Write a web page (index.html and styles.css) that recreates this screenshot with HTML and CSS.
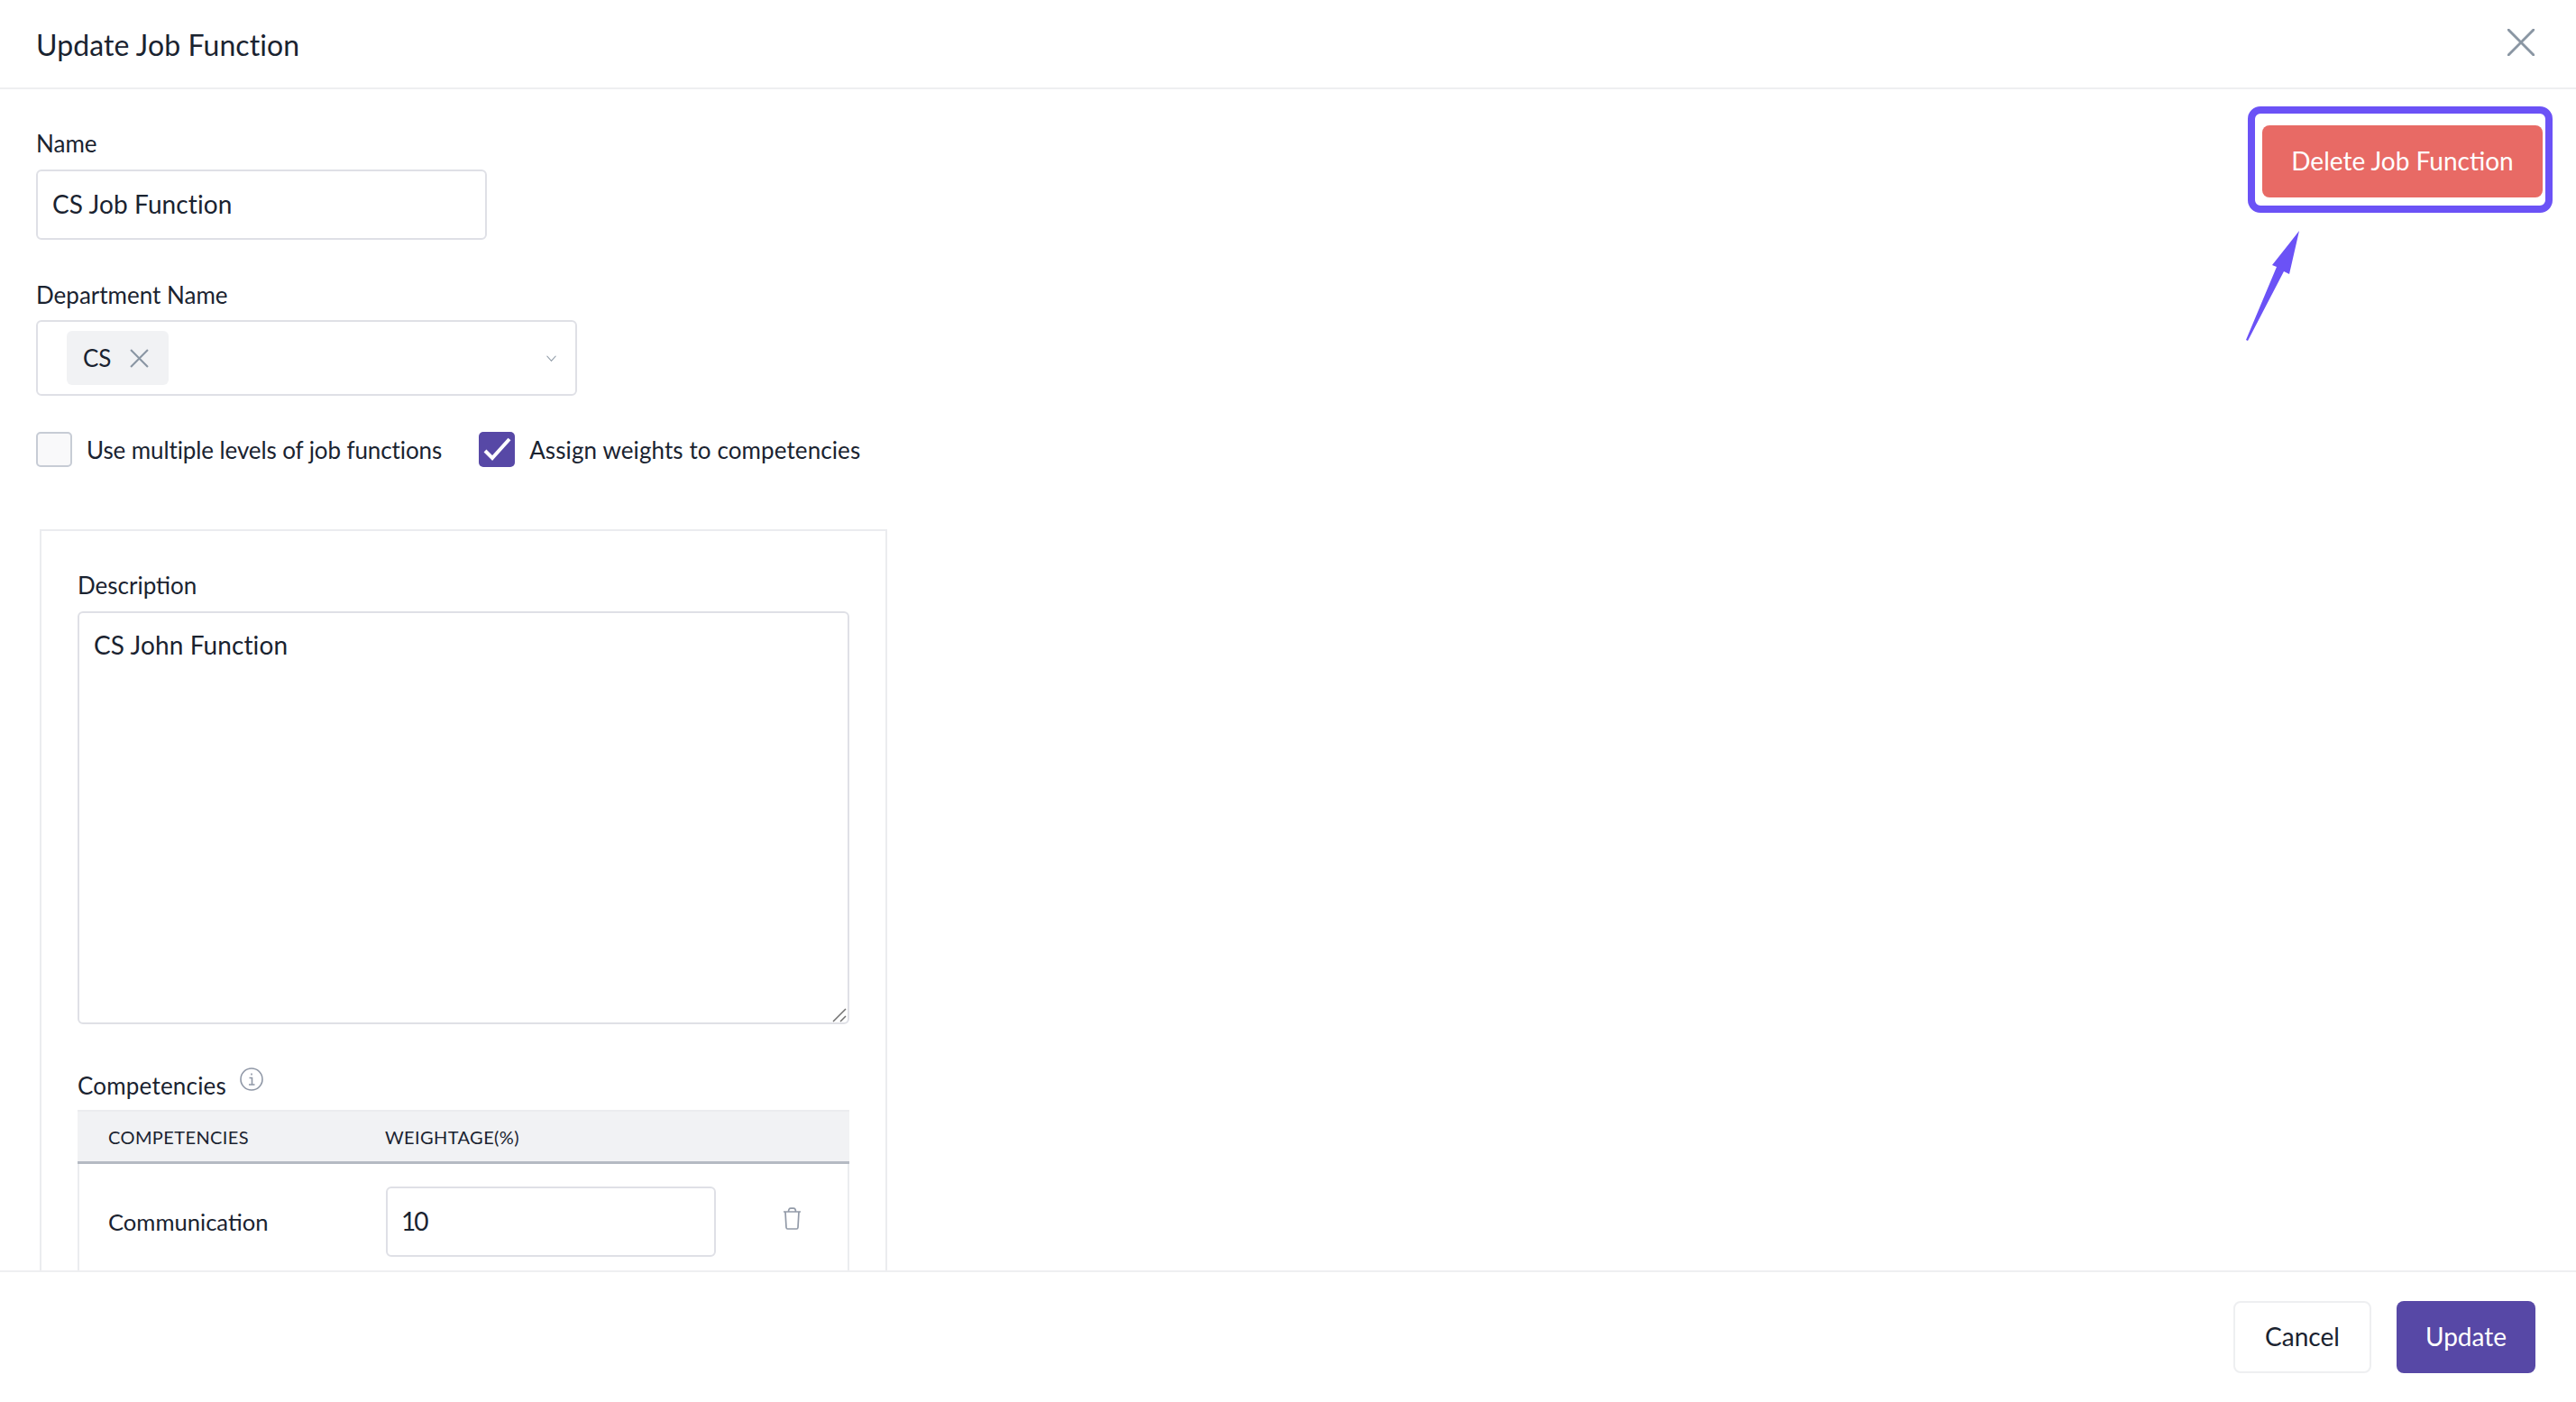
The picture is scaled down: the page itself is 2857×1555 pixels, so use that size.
FILE: index.html
```html
<!DOCTYPE html>
<html lang="en">
<head>
<meta charset="utf-8">
<title>Update Job Function</title>
<link rel="stylesheet" href="styles.css">
</head>
<body>
<div class="page">
  <header class="top">
    <h1 class="title">Update Job Function</h1>
    <svg class="close" viewBox="0 0 30 30"><path d="M1 1 29 29M29 1 1 29"/></svg>
  </header>
  <main class="main">
    <form class="form">
      <div class="label">Name</div>
      <div class="field name-field">CS Job Function</div>
      <div class="label dept-label">Department Name</div>
      <div class="select">
        <span class="chip"><span>CS</span>
          <svg class="chip-x" viewBox="0 0 20 20"><path d="M1 1 19 19M19 1 1 19"/></svg>
        </span>
        <svg class="chevron" viewBox="0 0 10 6"><path d="M.5.5 5 5.5 9.5.5"/></svg>
      </div>
      <div class="checks">
        <div class="check-item">
          <span class="box"></span>
          <span class="check-label tight">Use multiple levels of job functions</span>
        </div>
        <div class="check-item">
          <span class="box on"><svg viewBox="0 0 40 39"><path d="M7 21 15 29 34 8"/></svg></span>
          <span class="check-label loose">Assign weights to competencies</span>
        </div>
      </div>
      <section class="panel">
        <div class="label">Description</div>
        <div class="area-wrap">
          <textarea class="area">CS John Function</textarea>
          <svg class="grip" viewBox="0 0 16 16"><path d="M1 15 15 1M9 15 15 9"/></svg>
        </div>
        <div class="comp-head">
          <span class="label comp-label">Competencies</span>
          <svg class="info" viewBox="0 0 26 26"><circle cx="13" cy="13" r="12"/><path d="M10.500 11.500H13.500V19M10 19H16.500M13 6.500V8.500"/></svg>
        </div>
        <div class="table">
          <div class="thead"><span>COMPETENCIES</span><span>WEIGHTAGE(%)</span></div>
          <div class="row">
            <span class="cell-name">Communication</span>
            <div class="field weight">10</div>
            <svg class="trash" viewBox="0 0 21 25"><path d="M1 5H20M3 5 4 22.500Q4.200 24 5.500 24H15.500Q16.800 24 17 22.500L18 5M6.500 5Q6.500 1.200 9 1.200H12Q14.500 1.200 14.500 5"/></svg>
          </div>
        </div>
      </section>
    </form>
    <div class="delete-wrap">
      <button type="button" class="btn danger">Delete Job Function</button>
      <span class="highlight"></span>
      <svg class="arrow" viewBox="0 0 62 124"><path d="M60 1 49 49 43 46 3 123 1 122 35 41 30 39Z"/></svg>
    </div>
  </main>
  <footer class="bottom">
    <button type="button" class="btn ghost">Cancel</button>
    <button type="button" class="btn primary">Update</button>
  </footer>
</div>
</body>
</html>
```
FILE: styles.css
```css
* { box-sizing: border-box; }
html, body { margin: 0; height: 100%; background: #fff; }
body { font-family: Lato, "Open Sans", sans-serif; color: #1a2330; }
.page { height: 1555px; display: flex; flex-direction: column; overflow: hidden; }

.top { height: 99px; flex: none; display: flex; align-items: center; justify-content: space-between; padding: 0 46px 0 40px; border-bottom: 2px solid #eeeff1; }
.title { margin: 0; padding-top: 2px; font-size: 32px; font-weight: 400; line-height: 40px; letter-spacing: .1px; }
.close { width: 30px; height: 30px; fill: none; stroke: #8a96a3; stroke-width: 3; stroke-linecap: round; margin-bottom: 3px; }

.main { flex: 1; min-height: 0; display: flex; justify-content: space-between; align-items: flex-start; overflow: hidden; }
.form { width: 990px; padding: 44px 0 0 40px; }
.label { display: block; font-size: 26px; line-height: 32px; margin-bottom: 13px; }
.dept-label { margin: 45px 0 12px; }
.field { height: 78px; border: 2.500px solid #dfe0e6; border-radius: 6px; font-size: 28px; letter-spacing: .1px; line-height: 73px; padding-left: 16px; background: #fff; }
.name-field { width: 500px; }

.select { width: 600px; height: 84px; border: 2.500px solid #dfe0e6; border-radius: 6px; display: flex; align-items: center; justify-content: space-between; padding: 0 21px 0 32px; }
.chip { width: 113px; height: 60px; border-radius: 6px; background: #f1f2f4; display: flex; align-items: center; gap: 21px; padding-left: 18px; font-size: 26px; }
.chip-x { width: 21px; height: 21px; fill: none; stroke: #8a96a3; stroke-width: 2; }
.chevron { width: 11px; height: 7px; fill: none; stroke: #8a96a3; stroke-width: 1; }

.checks { display: flex; gap: 41px; margin-top: 40px; }
.check-item { display: flex; align-items: center; gap: 16px; }
.box { width: 40px; height: 39px; flex: none; border: 2.500px solid #c7ccd5; border-radius: 5px; background: #f9f9fa; }
.box.on { border: 0; background: #5748a6; }
.box svg { display: block; width: 40px; height: 39px; fill: none; stroke: #fff; stroke-width: 4; }
.check-label { font-size: 26px; line-height: 32px; }
.tight { letter-spacing: -.1px; }
.loose { letter-spacing: .1px; }

.panel { width: 940px; margin: 69px 0 0 4px; padding: 44px 40px 0; border: 2px solid #ebecef; border-bottom: 0; }
.area-wrap { position: relative; }
.area { display: block; width: 856px; height: 458px; font: 28px/40px Lato, sans-serif; letter-spacing: .1px; color: inherit; border: 2.500px solid #dfe0e6; border-radius: 6px; padding: 15px 16px; outline: 0; resize: none; }
.grip { position: absolute; right: 3px; bottom: 2px; width: 16px; height: 16px; fill: none; stroke: #707070; stroke-width: 1.500; }
.comp-head { display: flex; align-items: flex-start; gap: 15px; margin-top: 52px; }
.comp-label { margin-bottom: 11px; letter-spacing: .2px; }
.info { width: 26px; height: 26px; margin-top: -4px; fill: none; stroke: #8f97a6; stroke-width: 1.600; }

.table { border: 2px solid #ebecef; border-width: 0 2px; }
.thead { height: 60px; margin: 0 -2px; padding-left: 34px; display: grid; grid-template-columns: 307px 1fr; align-items: center; background: #f1f2f4; border-top: 2px solid #ebecef; border-bottom: 3px solid #b5bac3; font-size: 20px; letter-spacing: .4px; }
.row { display: grid; grid-template-columns: 308px 366px 1fr; align-items: center; padding: 25px 0 60px 32px; font-size: 25.600px; }
.weight { height: 78px; padding-left: 15px; letter-spacing: -2px; }
.trash { width: 21px; height: 25px; margin: -8px 0 0 74px; fill: none; stroke: #929aa8; stroke-width: 1.700; }

.delete-wrap { position: relative; margin: 40px 37px 0 0; }
.btn { display: block; height: 80px; border: 0; border-radius: 8px; font: 28px/1 Lato, sans-serif; padding: 0 0 2px; }
.danger { width: 311px; background: #e86a65; color: #fff; }
.highlight { position: absolute; left: -16px; right: -11px; top: -21px; bottom: -17px; border: 8px solid #6b52f6; border-radius: 14px; }
.arrow { position: absolute; left: -19px; top: 116px; width: 62px; height: 124px; fill: #6b52f6; }

.bottom { height: 146px; flex: none; display: flex; justify-content: flex-end; gap: 28px; padding: 32px 45px 0 0; border-top: 2px solid #eeeff1; background: #fff; }
.ghost { width: 153px; background: #fff; border: 2.500px solid #eeeff1; color: #1a2330; }
.primary { width: 154px; background: #5748a6; color: #fff; }
```
